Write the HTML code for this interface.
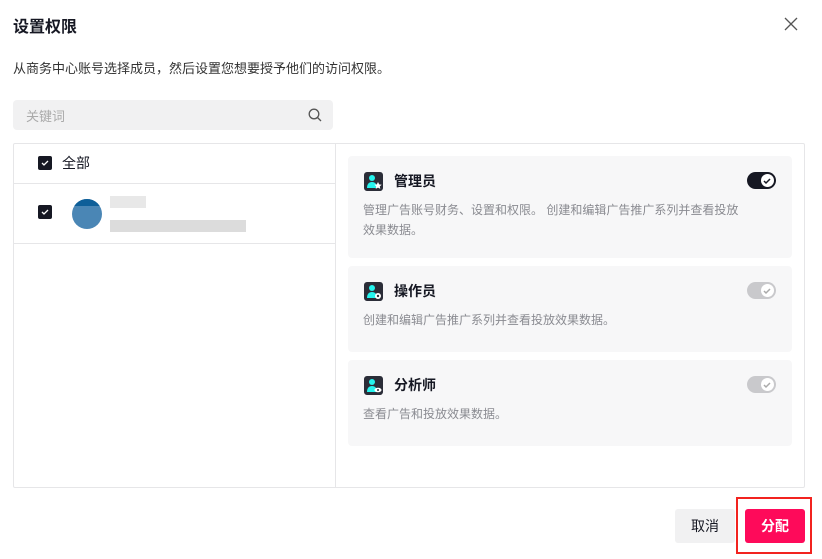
<!DOCTYPE html>
<html><head><meta charset="utf-8"><style>
*{box-sizing:border-box;margin:0;padding:0}
body{width:822px;height:559px;background:#fff;font-family:"Liberation Sans","Noto Sans CJK SC",sans-serif;color:#161823;position:relative;overflow:hidden}
.a{position:absolute}
.cb{position:absolute;width:14px;height:14px;background:#161823;border-radius:2px}
.cb svg{position:absolute;left:2px;top:2px}
.card{position:absolute;left:348px;width:444px;background:#f7f7f8;border-radius:4px}
.ic{position:absolute;left:16px;top:16px;width:19px;height:19px;background:#2b2d38;border-radius:3px}
.ct{position:absolute;left:46px;top:15px;font-size:14px;font-weight:bold;color:#161823}
.cd{position:absolute;left:15px;font-size:12px;color:#8a8b91;line-height:20px;width:420px}
.tg{position:absolute;left:399px;top:16px;width:29px;height:17px;border-radius:9px}
</style></head><body>
<div class="a" style="left:13px;top:13px;font-size:16px;font-weight:bold">设置权限</div>
<svg class="a" style="left:784px;top:17px" width="14" height="14"><path d="M1 1L13 13M13 1L1 13" stroke="#555" stroke-width="1.3"/></svg>
<div class="a" style="left:13px;top:58px;font-size:13px;color:#333">从商务中心账号选择成员，然后设置您想要授予他们的访问权限。</div>
<div class="a" style="left:13px;top:100px;width:320px;height:30px;background:#f1f1f2;border-radius:4px"></div>
<div class="a" style="left:26px;top:106px;font-size:13px;color:#aaa">关键词</div>
<svg class="a" style="left:308px;top:108px" width="14" height="14"><circle cx="6" cy="6" r="4.8" fill="none" stroke="#555" stroke-width="1.3"/><path d="M9.5 9.5L13 13" stroke="#555" stroke-width="1.3"/></svg>
<div class="a" style="left:13px;top:143px;width:792px;height:345px;border:1px solid #e6e6e8;border-radius:2px"></div>
<div class="a" style="left:335px;top:143px;width:1px;height:345px;background:#e6e6e8"></div>
<div class="a" style="left:14px;top:183px;width:321px;height:1px;background:#e6e6e8"></div>
<div class="a" style="left:14px;top:243px;width:321px;height:1px;background:#e6e6e8"></div>
<div class="cb" style="left:38px;top:156px"><svg width="10" height="10"><path d="M2 5l2 2 4-4" stroke="#fff" stroke-width="1.3" fill="none"/></svg></div>
<div class="a" style="left:62px;top:153px;font-size:14px">全部</div>
<div class="cb" style="left:38px;top:205px"><svg width="10" height="10"><path d="M2 5l2 2 4-4" stroke="#fff" stroke-width="1.3" fill="none"/></svg></div>
<div class="a" style="left:72px;top:199px;width:30px;height:30px;border-radius:50%;background:#4a86b5;overflow:hidden"><div style="height:7px;background:#0e5f99"></div></div>
<div class="a" style="left:110px;top:196px;width:36px;height:12px;background:#e8e8e8"></div>
<div class="a" style="left:110px;top:220px;width:136px;height:12px;background:#dcdcdc"></div>
<div class="card" style="top:156px;height:102px">
<div class="ic"><svg width="19" height="19"><circle cx="8" cy="6" r="3" fill="#25f4ee"/><path d="M3 16c0-4 2-6 5-6s5 2 5 6z" fill="#25f4ee"/><path d="M14 10l1.2 2.4 2.5.3-1.9 1.7.5 2.5-2.3-1.3-2.3 1.3.5-2.5-1.9-1.7 2.5-.3z" fill="#fff"/></svg></div>
<div class="ct">管理员</div>
<div class="tg" style="background:#161823"><div style="position:absolute;right:2px;top:2px;width:13px;height:13px;border-radius:50%;background:#fff"></div><svg class="a" style="left:16px;top:5px" width="9" height="8"><path d="M1 4l2 2 4-4" stroke="#161823" stroke-width="1.5" fill="none"/></svg></div>
<div class="cd" style="top:44px">管理广告账号财务、设置和权限。 创建和编辑广告推广系列并查看投放<br>效果数据。</div>
</div>
<div class="card" style="top:266px;height:86px">
<div class="ic"><svg width="19" height="19"><circle cx="8" cy="6" r="3" fill="#25f4ee"/><path d="M3 16c0-4 2-6 5-6s5 2 5 6z" fill="#25f4ee"/><circle cx="14" cy="14" r="3" fill="#fff"/><circle cx="14" cy="14" r="1.2" fill="#2b2d38"/></svg></div>
<div class="ct">操作员</div>
<div class="tg" style="background:#c9c9cc"><div style="position:absolute;right:2px;top:2px;width:13px;height:13px;border-radius:50%;background:#fff"></div><svg class="a" style="left:16px;top:5px" width="9" height="8"><path d="M1 4l2 2 4-4" stroke="#aaa" stroke-width="1.5" fill="none"/></svg></div>
<div class="cd" style="top:44px">创建和编辑广告推广系列并查看投放效果数据。</div>
</div>
<div class="card" style="top:360px;height:86px">
<div class="ic"><svg width="19" height="19"><circle cx="8" cy="6" r="3" fill="#25f4ee"/><path d="M3 16c0-4 2-6 5-6s5 2 5 6z" fill="#25f4ee"/><ellipse cx="14" cy="14" rx="3.5" ry="2.3" fill="#fff"/><circle cx="14" cy="14" r="1" fill="#2b2d38"/></svg></div>
<div class="ct">分析师</div>
<div class="tg" style="background:#c9c9cc"><div style="position:absolute;right:2px;top:2px;width:13px;height:13px;border-radius:50%;background:#fff"></div><svg class="a" style="left:16px;top:5px" width="9" height="8"><path d="M1 4l2 2 4-4" stroke="#aaa" stroke-width="1.5" fill="none"/></svg></div>
<div class="cd" style="top:44px">查看广告和投放效果数据。</div>
</div>
<div class="a" style="left:675px;top:509px;width:60px;height:34px;background:#f1f1f2;border-radius:3px;font-size:14px;text-align:center;line-height:34px">取消</div>
<div class="a" style="left:736px;top:497px;width:76px;height:57px;border:2px solid #f2231f"></div>
<div class="a" style="left:745px;top:509px;width:60px;height:34px;background:#fe0a5a;border-radius:3px;font-size:14px;color:#fff;text-align:center;line-height:34px;font-weight:bold">分配</div>
</body></html>
